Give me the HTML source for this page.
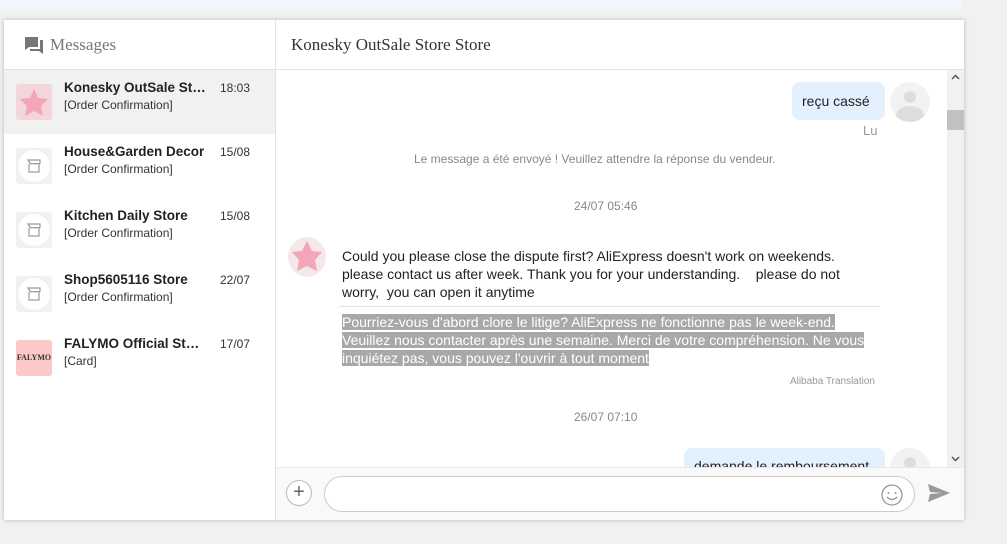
<!DOCTYPE html>
<html><head><meta charset="utf-8"><style>
*{box-sizing:border-box;margin:0;padding:0}
body{width:1007px;height:544px;background:#f1f1f1;font-family:"Liberation Sans",Arial,sans-serif;position:relative;overflow:hidden}
.top{position:absolute;left:0;top:0;width:963px;height:10px;background:#f2f6fb}
.card{position:absolute;left:4px;top:20px;width:960px;height:500px;background:#fff;box-shadow:0 0 4px rgba(0,0,0,.25)}
.side{position:absolute;left:0;top:0;width:272px;height:500px;border-right:1px solid #e4e4e4}
.shead{height:50px;border-bottom:1px solid #e4e4e4;display:flex;align-items:center;padding-left:20px;font-family:"Liberation Serif",serif;font-size:17px;color:#777}
.item{position:absolute;left:0;width:271px;height:64px}
.av{position:absolute;left:12px;top:14px;width:36px;height:36px;border-radius:3px}
.nm{position:absolute;left:60px;top:10px;font-size:13.5px;font-weight:bold;color:#222;max-width:152px;white-space:nowrap;overflow:hidden;text-overflow:ellipsis}
.tm{position:absolute;left:216px;top:11px;font-size:12px;color:#333}
.sub{position:absolute;left:60px;top:28px;font-size:12px;color:#333}
.main{position:absolute;left:272px;top:0;width:688px;height:500px}
.mhead{height:50px;border-bottom:1px solid #e4e4e4;font-family:"Liberation Serif",serif;font-size:17px;color:#333;padding:15px 0 0 15px}
.gray{position:absolute;font-size:12px;color:#888}
.txt{position:absolute;left:66px;font-size:14px;line-height:18px;color:#222}
.hl{background:#a8a8a8;color:#fff}
</style></head><body>
<div class="top"></div>
<div class="card">
 <div class="side">
  <div class="shead"><svg width="20" height="18" viewBox="0 0 20 18" style="margin-right:6px"><path d="M1 1h13v10H5l-4 3z" fill="#777"/><path d="M16 4h3v14l-4-3H6v-2h10z" fill="#777"/></svg>Messages</div>
  <div class="item" style="top:50px;background:#f1f1f1"><div class="av" style="background:#f3d6dc"><svg width="36" height="36" viewBox="0 0 36 36"><path d="M18 5l4 9 10 1-7 7 2 10-9-5-9 5 2-10-7-7 10-1z" fill="#f2a6b8"/></svg></div><div class="nm" style="max-width:146px">Konesky OutSale Store</div><div class="tm">18:03</div><div class="sub">[Order Confirmation]</div></div>
  <div class="item" style="top:114px"><div class="av" style="background:#f1f1f1"><svg width="36" height="36"><circle cx="18" cy="18" r="16" fill="#fff"/><path d="M12 12h12v3c0 1-2 1-2 0 0 1-2 1-2 0 0 1-2 1-2 0 0 1-2 1-2 0 0 1-2 1-2 0zM13 16v8h10v-8" fill="none" stroke="#999" stroke-width="1.2"/></svg></div><div class="nm" style="max-width:142px">House&amp;Garden Decor</div><div class="tm">15/08</div><div class="sub">[Order Confirmation]</div></div>
  <div class="item" style="top:178px"><div class="av" style="background:#f1f1f1"><svg width="36" height="36"><circle cx="18" cy="18" r="16" fill="#fff"/><path d="M12 12h12v3c0 1-2 1-2 0 0 1-2 1-2 0 0 1-2 1-2 0 0 1-2 1-2 0 0 1-2 1-2 0zM13 16v8h10v-8" fill="none" stroke="#999" stroke-width="1.2"/></svg></div><div class="nm">Kitchen Daily Store</div><div class="tm">15/08</div><div class="sub">[Order Confirmation]</div></div>
  <div class="item" style="top:242px"><div class="av" style="background:#f1f1f1"><svg width="36" height="36"><circle cx="18" cy="18" r="16" fill="#fff"/><path d="M12 12h12v3c0 1-2 1-2 0 0 1-2 1-2 0 0 1-2 1-2 0 0 1-2 1-2 0 0 1-2 1-2 0zM13 16v8h10v-8" fill="none" stroke="#999" stroke-width="1.2"/></svg></div><div class="nm">Shop5605116 Store</div><div class="tm">22/07</div><div class="sub">[Order Confirmation]</div></div>
  <div class="item" style="top:306px"><div class="av" style="background:#fcc8c8;font-family:'Liberation Serif',serif;font-size:8px;font-weight:bold;color:#333;text-align:center;line-height:36px">FALYMO</div><div class="nm" style="max-width:142px">FALYMO Official Store</div><div class="tm">17/07</div><div class="sub">[Card]</div></div>
 </div>
 <div class="main">
  <div class="mhead">Konesky OutSale Store Store</div>
  <div style="position:absolute;left:0;top:50px;width:688px;height:397px;overflow:hidden">
   <div style="position:absolute;left:516px;top:12px;width:93px;height:38px;background:#e3f0fd;border-radius:8px;font-size:14px;color:#222;padding:11px 0 0 10px">reçu cassé</div>
   <div style="position:absolute;left:614px;top:12px;width:40px;height:40px;border-radius:50%;background:#f2f2f2;overflow:hidden"><div style="position:absolute;left:14px;top:9px;width:12px;height:12px;border-radius:50%;background:#ddd"></div><div style="position:absolute;left:6px;top:24px;width:28px;height:20px;border-radius:50%;background:#ddd"></div></div>
   <div class="gray" style="left:587px;top:53px;font-size:13px;color:#999">Lu</div>
   <div class="gray" style="left:138px;top:82px">Le message a été envoyé ! Veuillez attendre la réponse du vendeur.</div>
   <div class="gray" style="left:298px;top:129px">24/07 05:46</div>
   <div style="position:absolute;left:12px;top:167px;width:38px;height:40px;border-radius:50%;background:#f5e8eb"><svg width="38" height="40"><path d="M19 4l5 10 10 1-7 8 2 11-10-5-10 5 2-11-7-8 10-1z" fill="#f2a6b8"/></svg></div>
   <div class="txt" style="top:177px;width:512px">Could you please close the dispute first? AliExpress doesn't work on weekends. please contact us after week. Thank you for your understanding. &nbsp;&nbsp; please do not worry, &nbsp;you can open it anytime</div>
   <div style="position:absolute;left:63px;top:236px;width:541px;border-top:1px solid #e4e4e4"></div>
   <div class="txt" style="top:243px;width:540px"><span class="hl">Pourriez-vous d'abord clore le litige? AliExpress ne fonctionne pas le week-end. Veuillez nous contacter après une semaine. Merci de votre compréhension. Ne vous inquiétez pas, vous pouvez l'ouvrir à tout moment</span></div>
   <div class="gray" style="left:506px;top:306px;font-size:10px;color:#999;width:93px;text-align:right">Alibaba Translation</div>
   <div class="gray" style="left:298px;top:340px">26/07 07:10</div>
   <div style="position:absolute;left:408px;top:378px;width:201px;height:38px;background:#e3f0fd;border-radius:8px;font-size:14px;color:#222;padding:10px 0 0 10px">demande le remboursement</div>
   <div style="position:absolute;left:614px;top:378px;width:40px;height:40px;border-radius:50%;background:#f2f2f2;overflow:hidden"><div style="position:absolute;left:14px;top:9px;width:12px;height:12px;border-radius:50%;background:#ddd"></div></div>
   <div style="position:absolute;left:671px;top:0;width:17px;height:397px;background:#f1f1f1"><div style="position:absolute;left:0;top:40px;width:17px;height:20px;background:#c1c1c1"></div><svg style="position:absolute;left:4px;top:4px" width="9" height="6"><path d="M1 5l3.5-3.5L8 5" fill="none" stroke="#555" stroke-width="1.5"/></svg><svg style="position:absolute;left:4px;top:386px" width="9" height="6"><path d="M1 1l3.5 3.5L8 1" fill="none" stroke="#555" stroke-width="1.5"/></svg></div>
  </div>
  <div style="position:absolute;left:0;top:447px;width:688px;height:53px;background:#f9f9f9;border-top:1px solid #e8e8e8">
   <div style="position:absolute;left:10px;top:12px;width:26px;height:26px;border:1px solid #bbb;border-radius:50%;text-align:center;line-height:23px;font-size:20px;color:#666;background:#fff">+</div>
   <div style="position:absolute;left:48px;top:8px;width:591px;height:36px;border:1px solid #ccc;border-radius:18px;background:#fff"><svg style="position:absolute;right:10px;top:6px" width="24" height="24"><circle cx="12" cy="12" r="10" fill="none" stroke="#999" stroke-width="1.3"/><circle cx="8.5" cy="10" r="1" fill="#999"/><circle cx="15.5" cy="10" r="1" fill="#999"/><path d="M7 14q5 5 10 0" fill="none" stroke="#999" stroke-width="1.3"/></svg></div>
   <svg style="position:absolute;left:651px;top:15px" width="24" height="20"><path d="M1 1l22 9-22 9 2-8 12-1-12-1z" fill="#999"/></svg>
  </div>
 </div>
</div>
</body></html>
